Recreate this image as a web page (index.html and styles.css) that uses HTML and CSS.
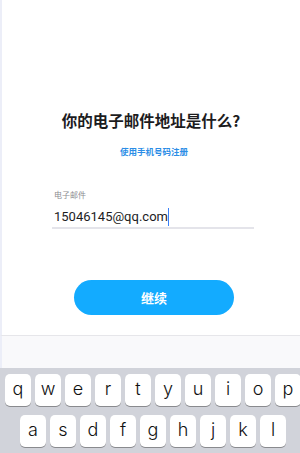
FILE: index.html
```html
<!DOCTYPE html>
<html lang="zh">
<head>
<meta charset="utf-8">
<link rel="stylesheet" href="styles.css">
</head>
<body>
<div class="screen">
  <main class="content">
    <h1 class="title">你的电子邮件地址是什么?</h1>
    <a class="phone-link">使用手机号码注册</a>
    <div class="field">
      <div class="label">电子邮件</div>
      <div class="input"><span class="value">15046145@qq.com</span><span class="cursor"></span></div>
    </div>
    <button class="continue">继续</button>
  </main>
  <div class="accessory"></div>
  <div class="keyboard">
    <div class="row">
      <span class="key">q</span><span class="key">w</span><span class="key">e</span><span class="key">r</span><span class="key">t</span><span class="key">y</span><span class="key">u</span><span class="key">i</span><span class="key">o</span><span class="key">p</span>
    </div>
    <div class="row row2">
      <span class="key">a</span><span class="key">s</span><span class="key">d</span><span class="key">f</span><span class="key">g</span><span class="key">h</span><span class="key">j</span><span class="key">k</span><span class="key">l</span>
    </div>
  </div>
</div>
</body>
</html>
```

FILE: styles.css
```css
* { box-sizing: border-box; }
html, body { margin: 0; padding: 0; background: #ffffff; }
body {
  width: 300px;
  height: 453px;
  overflow: hidden;
  font-family: "Noto Sans CJK SC", "Noto Sans", sans-serif;
}
.screen { display: flex; flex-direction: column; height: 453px; }
.content {
  height: 336px;
  border-left: 2px solid #eceef8;
  border-bottom: 1px solid #e6e6ea;
  display: flex;
  flex-direction: column;
  align-items: center;
  padding-top: 108px;
}
.title {
  margin: 0;
  font-size: 15.5px;
  font-weight: 600;
  color: #1c1c1e;
  line-height: 24px;
  letter-spacing: 0;
}
.phone-link {
  margin-top: 12px;
  font-size: 8.5px;
  font-weight: 700;
  color: #2b8de6;
  line-height: 14px;
  margin-left: 6px;
}
.field {
  margin-top: 31px;
  width: 202px;
  margin-left: 4px;
  display: flex;
  flex-direction: column;
}
.label {
  font-size: 8px;
  color: #8c8c90;
  line-height: 12px;
  padding-left: 2px;
}
.input {
  margin-top: 5px;
  height: 23px;
  border-bottom: 2px solid #e4e4ea;
  display: flex;
  align-items: center;
  padding-left: 2px;
}
.value {
  font-family: Roboto, "Noto Sans", sans-serif;
  font-size: 13px;
  color: #1c1c1e;
}
.cursor {
  width: 1.5px;
  height: 18px;
  background: #3a80f7;
  margin-left: 0;
}
.continue {
  margin-top: 51px;
  margin-left: 6px;
  width: 160px;
  height: 35px;
  border: none;
  border-radius: 18px;
  background: #13abff;
  color: #ffffff;
  font-family: "Noto Sans CJK SC", sans-serif;
  font-size: 13px;
  font-weight: 700;
  padding: 0;
}
.accessory {
  height: 32px;
  background: #f9f9fb;
  border-left: 2px solid #eceef8;
}
.keyboard {
  flex: 1;
  background: #d1d3da;
  display: flex;
  flex-direction: column;
  gap: 9px;
  padding: 6px 0 0 5px;
  overflow: hidden;
}
.row { display: flex; gap: 4px; white-space: nowrap; }
.row2 { padding-left: 15px; }
.key {
  flex: 0 0 26px;
  height: 32px;
  background: #ffffff;
  border-radius: 5px;
  box-shadow: 0 1px 0 #898a8e;
  display: flex;
  align-items: center;
  justify-content: center;
  font-family: Inter, "Liberation Sans", sans-serif;
  font-size: 18px;
  font-weight: 300;
  color: #111;
  padding-bottom: 3px;
}
```
